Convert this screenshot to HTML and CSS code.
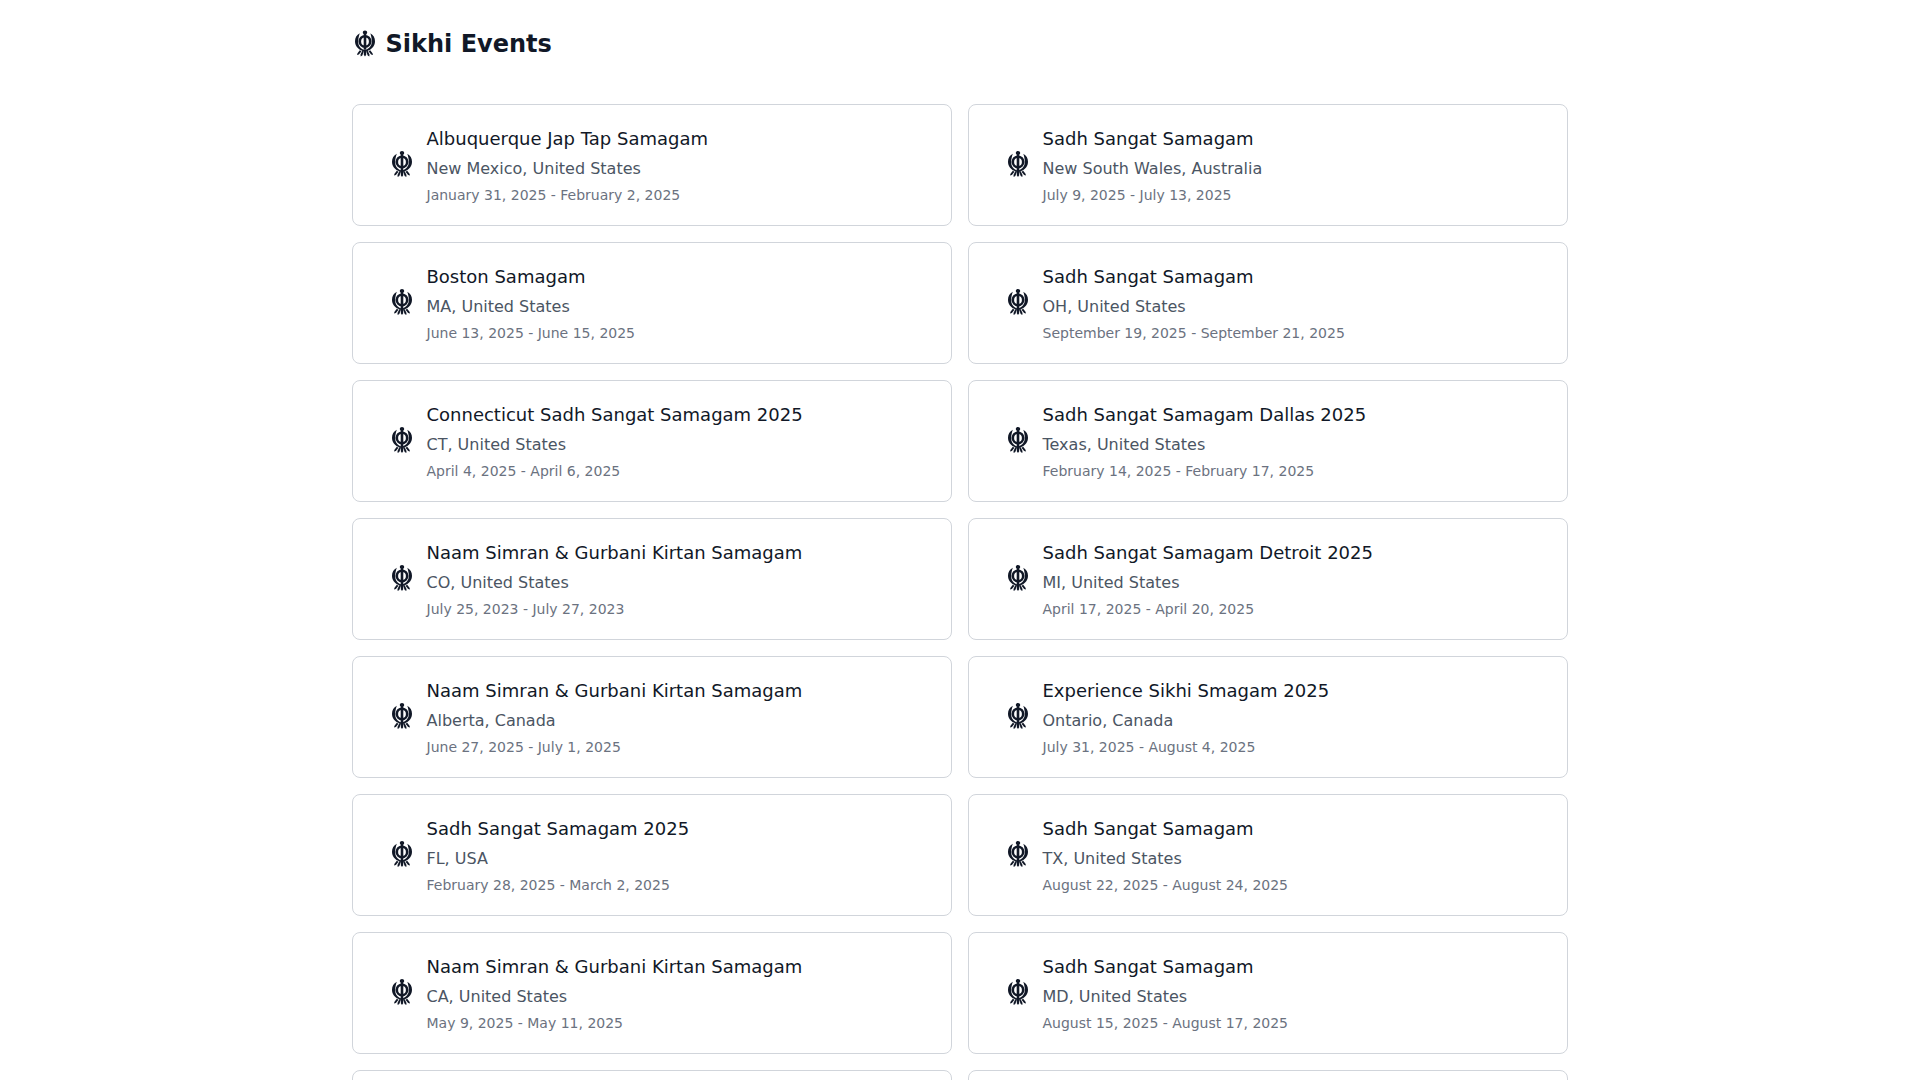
FILE: index.html
```html
<!DOCTYPE html>
<html lang="en">
<head>
<meta charset="utf-8">
<title>Sikhi Events</title>
<link rel="stylesheet" href="styles.css">
</head>
<body>
<svg class="defs" width="0" height="0" aria-hidden="true">
  <symbol id="khanda" viewBox="0 0 20 26">
    <path fill="currentColor" fill-rule="evenodd" d="M10 4.400a6.500 6.500 0 1 1 0 13a6.500 6.500 0 1 1 0-13zM10 7a3.900 3.900 0 1 0 0 7.800a3.900 3.900 0 1 0 0-7.800z"/>
    <path fill="currentColor" d="M10 0c1.300 0 2.200.9 2.200 2 0 .7-.3 1.300-.9 1.600V19H8.700V3.600C8.100 3.300 7.800 2.700 7.800 2 7.800.9 8.700 0 10 0z"/>
    <path fill="currentColor" d="M4.800 2.800C1.600 4.500 0 7.400 0 10.700c0 4.100 2.500 7.500 6.200 9.100l2.500 1.500.5-2C5.800 18.300 3.200 15.200 3.200 11.400c0-3 .6-5.900 1.600-8.600zM15.200 2.800C18.400 4.500 20 7.400 20 10.700c0 4.100-2.500 7.500-6.200 9.100l-2.500 1.500-.5-2c3.400-1.300 6-4.400 6-8.100 0-3-.6-5.900-1.600-8.600z"/>
    <path fill="currentColor" d="M9 19h2l.2 5.300-1.200 1.700-1.200-1.700zM7.300 20.200l1.500.9-1.500 4-1.600.9-.2-1.900zM12.700 20.200l-1.500.9 1.500 4 1.600.9.200-1.900zM4.800 19.800l1.700.9-2.600 3.300-1.900.6.500-1.900zM15.200 19.800l-1.700.9 2.600 3.300 1.900.6-.5-1.900z"/>
  </symbol>
</svg>
<main class="page">
  <header class="header">
    <svg class="logo"><use href="#khanda"/></svg>
    <h1 class="brand">Sikhi Events</h1>
  </header>
  <section class="grid">
    <a class="card"><svg class="icon"><use href="#khanda"/></svg><div><p class="name">Albuquerque Jap Tap Samagam</p><p class="place">New Mexico, United States</p><p class="dates">January 31, 2025 - February 2, 2025</p></div></a>
    <a class="card"><svg class="icon"><use href="#khanda"/></svg><div><p class="name">Sadh Sangat Samagam</p><p class="place">New South Wales, Australia</p><p class="dates">July 9, 2025 - July 13, 2025</p></div></a>
    <a class="card"><svg class="icon"><use href="#khanda"/></svg><div><p class="name">Boston Samagam</p><p class="place">MA, United States</p><p class="dates">June 13, 2025 - June 15, 2025</p></div></a>
    <a class="card"><svg class="icon"><use href="#khanda"/></svg><div><p class="name">Sadh Sangat Samagam</p><p class="place">OH, United States</p><p class="dates">September 19, 2025 - September 21, 2025</p></div></a>
    <a class="card"><svg class="icon"><use href="#khanda"/></svg><div><p class="name">Connecticut Sadh Sangat Samagam 2025</p><p class="place">CT, United States</p><p class="dates">April 4, 2025 - April 6, 2025</p></div></a>
    <a class="card"><svg class="icon"><use href="#khanda"/></svg><div><p class="name">Sadh Sangat Samagam Dallas 2025</p><p class="place">Texas, United States</p><p class="dates">February 14, 2025 - February 17, 2025</p></div></a>
    <a class="card"><svg class="icon"><use href="#khanda"/></svg><div><p class="name">Naam Simran &amp; Gurbani Kirtan Samagam</p><p class="place">CO, United States</p><p class="dates">July 25, 2023 - July 27, 2023</p></div></a>
    <a class="card"><svg class="icon"><use href="#khanda"/></svg><div><p class="name">Sadh Sangat Samagam Detroit 2025</p><p class="place">MI, United States</p><p class="dates">April 17, 2025 - April 20, 2025</p></div></a>
    <a class="card"><svg class="icon"><use href="#khanda"/></svg><div><p class="name">Naam Simran &amp; Gurbani Kirtan Samagam</p><p class="place">Alberta, Canada</p><p class="dates">June 27, 2025 - July 1, 2025</p></div></a>
    <a class="card"><svg class="icon"><use href="#khanda"/></svg><div><p class="name">Experience Sikhi Smagam 2025</p><p class="place">Ontario, Canada</p><p class="dates">July 31, 2025 - August 4, 2025</p></div></a>
    <a class="card"><svg class="icon"><use href="#khanda"/></svg><div><p class="name">Sadh Sangat Samagam 2025</p><p class="place">FL, USA</p><p class="dates">February 28, 2025 - March 2, 2025</p></div></a>
    <a class="card"><svg class="icon"><use href="#khanda"/></svg><div><p class="name">Sadh Sangat Samagam</p><p class="place">TX, United States</p><p class="dates">August 22, 2025 - August 24, 2025</p></div></a>
    <a class="card"><svg class="icon"><use href="#khanda"/></svg><div><p class="name">Naam Simran &amp; Gurbani Kirtan Samagam</p><p class="place">CA, United States</p><p class="dates">May 9, 2025 - May 11, 2025</p></div></a>
    <a class="card"><svg class="icon"><use href="#khanda"/></svg><div><p class="name">Sadh Sangat Samagam</p><p class="place">MD, United States</p><p class="dates">August 15, 2025 - August 17, 2025</p></div></a>
    <a class="card"></a>
    <a class="card"></a>
  </section>
</main>
</body>
</html>
```
FILE: styles.css
```css
* { box-sizing: border-box; }
html, body { margin: 0; background: #fff; }
body { font-family: "DejaVu Sans", sans-serif; color: #111827; }
.defs { position: absolute; }
.page { width: 1280px; margin: 0 auto; padding: 0 32px 32px; }
.header { display: flex; align-items: center; gap: 10.5px; height: 88px; padding-left: 3px; }
.logo { width: 20px; height: 27px; margin-top: -2px; color: #111827; }
.brand { margin: 0; font-size: 24px; line-height: 32px; font-weight: 700; color: #111827; }
.grid { display: grid; grid-template-columns: 1fr 1fr; gap: 16px; margin-top: 16px; }
.card { display: flex; align-items: center; gap: 14.5px; height: 122px; padding: 0 24px 0 39px; border: 1px solid #d1d5db; border-radius: 8px; background: #fff; }
.icon { width: 20px; height: 26px; margin-top: -2px; color: #111827; flex: none; }
.name, .place, .dates { margin: 0; }
.name { font-size: 18px; line-height: 28px; color: #111827; }
.place { font-size: 16px; line-height: 24px; margin-top: 4px; color: #4b5563; }
.dates { font-size: 14px; line-height: 20px; margin-top: 4px; color: #6b7280; }
```
